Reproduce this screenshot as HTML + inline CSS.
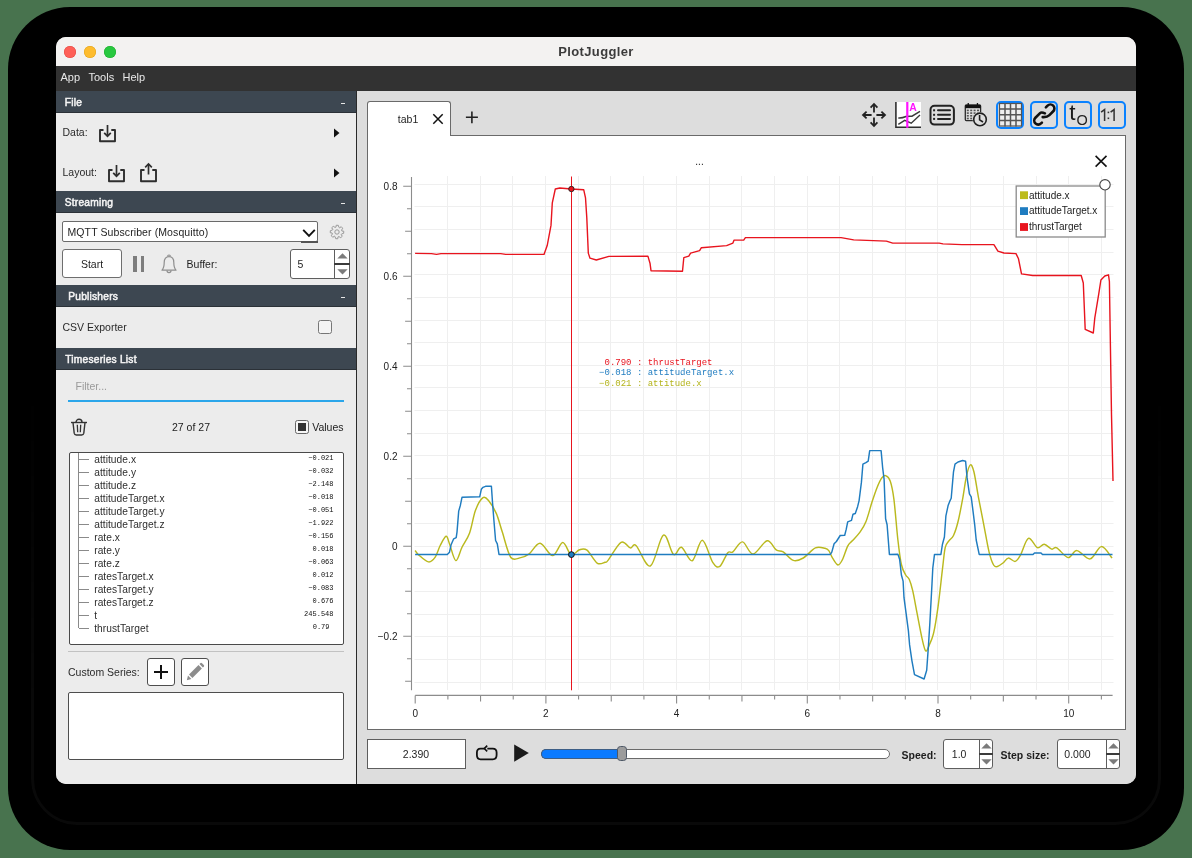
<!DOCTYPE html>
<html><head><meta charset="utf-8"><title>PlotJuggler</title><style>
*{box-sizing:border-box;margin:0;padding:0}
html,body{width:1192px;height:858px;overflow:hidden;background:#48734e;font-family:"Liberation Sans",sans-serif;}
.a{position:absolute}
.t{position:absolute;white-space:pre}
svg{position:absolute;overflow:visible}
</style></head><body>
<div class="a" style="left:8px;top:7px;width:1176px;height:843px;background:#000;border-radius:62px"></div>
<div class="a" style="left:31px;top:31px;width:1130px;height:794px;border:3px solid #090909;border-radius:46px;-webkit-mask-image:linear-gradient(to bottom,transparent 0%,transparent 45%,#000 85%)"></div>
<div class="a" style="left:56px;top:37px;width:1080px;height:747px;border-radius:10px;overflow:hidden;background:#dddddd">
<div class="a" style="left:-56px;top:-37px;width:1192px;height:858px;will-change:transform">
<div class="a" style="left:56.00px;top:37.00px;width:1080.00px;height:29.00px;background:#f3f2f1"></div>
<div class="a" style="left:64px;top:46px;width:12px;height:12px;border-radius:50%;background:#fe5f57;box-shadow:inset 0 0 0 0.5px #e2463f"></div>
<div class="a" style="left:84px;top:46px;width:12px;height:12px;border-radius:50%;background:#febc2e;box-shadow:inset 0 0 0 0.5px #e1a116"></div>
<div class="a" style="left:104px;top:46px;width:12px;height:12px;border-radius:50%;background:#28c840;box-shadow:inset 0 0 0 0.5px #1aab29"></div>
<div class="t" style="left:296.00px;width:600px;text-align:center;top:44.60px;font-size:13px;line-height:13px;color:#3b3b3b;font-weight:bold;font-family:'Liberation Sans',sans-serif;letter-spacing:0.35px">PlotJuggler</div>
<div class="a" style="left:56.00px;top:66.00px;width:1080.00px;height:25.00px;background:#323232"></div>
<div class="t" style="left:60.50px;top:71.69px;font-size:11px;line-height:11px;color:#e8e8e8;font-weight:normal;font-family:'Liberation Sans',sans-serif;">App</div>
<div class="t" style="left:88.50px;top:71.69px;font-size:11px;line-height:11px;color:#e8e8e8;font-weight:normal;font-family:'Liberation Sans',sans-serif;">Tools</div>
<div class="t" style="left:122.50px;top:71.69px;font-size:11px;line-height:11px;color:#e8e8e8;font-weight:normal;font-family:'Liberation Sans',sans-serif;">Help</div>
<div class="a" style="left:56.00px;top:91.00px;width:300.00px;height:693.00px;background:#ececec"></div>
<div class="a" style="left:355.50px;top:91.00px;width:1.50px;height:693.00px;background:#2a2a2a"></div>
<div class="a" style="left:56.00px;top:91.00px;width:299.50px;height:21.50px;background:#3d4751;border-bottom:1px solid #2b3137"></div>
<div class="t" style="left:64.80px;top:97.97px;font-size:10.2px;line-height:10.2px;color:#f5f5f5;font-weight:normal;font-family:'Liberation Sans',sans-serif;-webkit-text-stroke:0.5px #f5f5f5;letter-spacing:0.22px">File</div>
<div class="a" style="left:341.00px;top:102.50px;width:4.30px;height:1.20px;background:#e6e6e6"></div>
<div class="t" style="left:62.50px;top:127.11px;font-size:10.5px;line-height:10.5px;color:#2a2a2a;font-weight:normal;font-family:'Liberation Sans',sans-serif;">Data:</div>
<div class="t" style="left:62.50px;top:167.01px;font-size:10.5px;line-height:10.5px;color:#2a2a2a;font-weight:normal;font-family:'Liberation Sans',sans-serif;">Layout:</div>
<svg style="left:98.5px;top:125px" width="18" height="18" viewBox="0 0 18 18"><path d="M4.5 5 H1 V16.3 H16 V5 H12.3" fill="none" stroke="#2e2e2e" stroke-width="1.9" stroke-linejoin="round"/><path d="M8.5 0 V11" stroke="#2e2e2e" stroke-width="1.7"/><path d="M5.2 7.8 L8.5 11.2 L11.8 7.8" fill="none" stroke="#2e2e2e" stroke-width="1.7"/></svg>
<svg style="left:108.2px;top:165px" width="18" height="18" viewBox="0 0 18 18"><path d="M4.5 5 H1 V16.3 H16 V5 H12.3" fill="none" stroke="#2e2e2e" stroke-width="1.9" stroke-linejoin="round"/><path d="M8.5 0 V11" stroke="#2e2e2e" stroke-width="1.7"/><path d="M5.2 7.8 L8.5 11.2 L11.8 7.8" fill="none" stroke="#2e2e2e" stroke-width="1.7"/></svg>
<svg style="left:140.3px;top:163px" width="18" height="20" viewBox="0 0 18 20"><path d="M4.5 7 H1 V18.3 H16 V7 H12.3" fill="none" stroke="#2e2e2e" stroke-width="1.9" stroke-linejoin="round"/><path d="M8.5 1 V11.5" stroke="#2e2e2e" stroke-width="1.7"/><path d="M5.2 4.3 L8.5 1 L11.8 4.3" fill="none" stroke="#2e2e2e" stroke-width="1.7"/></svg>
<svg style="left:332px;top:127.5px" width="8" height="10"><path d="M2 0.5 L7.5 5 L2 9.5Z" fill="#111"/></svg>
<svg style="left:332px;top:167.5px" width="8" height="10"><path d="M2 0.5 L7.5 5 L2 9.5Z" fill="#111"/></svg>
<div class="a" style="left:56.00px;top:191.00px;width:299.50px;height:21.50px;background:#3d4751;border-bottom:1px solid #2b3137"></div>
<div class="t" style="left:64.80px;top:197.97px;font-size:10.2px;line-height:10.2px;color:#f5f5f5;font-weight:normal;font-family:'Liberation Sans',sans-serif;-webkit-text-stroke:0.5px #f5f5f5;letter-spacing:0.22px">Streaming</div>
<div class="a" style="left:341.00px;top:202.50px;width:4.30px;height:1.20px;background:#e6e6e6"></div>
<div class="a" style="left:62.00px;top:221.30px;width:255.80px;height:21.20px;background:#fff;border:1px solid #6a6a6a;border-radius:2px"></div>
<div class="a" style="left:301.00px;top:241.00px;width:16.50px;height:1.80px;background:#555"></div>
<div class="t" style="left:67.50px;top:227.11px;font-size:10.5px;line-height:10.5px;color:#1e1e1e;font-weight:normal;font-family:'Liberation Sans',sans-serif;letter-spacing:0.1px">MQTT Subscriber (Mosquitto)</div>
<svg style="left:302px;top:228px" width="14" height="10"><path d="M1.2 1.8 L7 7.8 L12.8 1.8" fill="none" stroke="#111" stroke-width="1.9"/></svg>
<svg style="left:330px;top:225px" width="14" height="14"><path d="M6.19 0.25 L8.33 0.33 L8.91 2.38 L9.78 2.84 L11.20 1.65 L12.65 3.22 L11.62 5.09 L11.90 6.02 L13.75 6.19 L13.67 8.33 L11.62 8.91 L11.16 9.78 L12.35 11.20 L10.78 12.65 L8.91 11.62 L7.98 11.90 L7.81 13.75 L5.67 13.67 L5.09 11.62 L4.22 11.16 L2.80 12.35 L1.35 10.78 L2.38 8.91 L2.10 7.98 L0.25 7.81 L0.33 5.67 L2.38 5.09 L2.84 4.22 L1.65 2.80 L3.22 1.35 L5.09 2.38 L6.02 2.10Z" fill="none" stroke="#9a9a9a" stroke-width="1"/><circle cx="7" cy="7" r="2.2" fill="none" stroke="#9a9a9a" stroke-width="1"/></svg>
<div class="a" style="left:62.00px;top:249.40px;width:59.80px;height:29.10px;background:#fff;border:1px solid #6e6e6e;border-radius:3px"></div>
<div class="t" style="left:-208.00px;width:600px;text-align:center;top:258.71px;font-size:10.5px;line-height:10.5px;color:#1e1e1e;font-weight:normal;font-family:'Liberation Sans',sans-serif;">Start</div>
<div class="a" style="left:133.40px;top:255.90px;width:3.90px;height:16.00px;background:#7d7d7d"></div>
<div class="a" style="left:140.50px;top:255.90px;width:3.90px;height:16.00px;background:#7d7d7d"></div>
<svg style="left:160px;top:253px" width="18" height="22" viewBox="0 0 18 22"><path d="M2 17.2 C4 15 4.2 13 4.2 9.5 C4.2 6 6 3.6 9 3.6 C12 3.6 13.8 6 13.8 9.5 C13.8 13 14 15 16 17.2 Z" fill="none" stroke="#8e8e8e" stroke-width="1.2" stroke-linejoin="round"/><path d="M7.6 3.4 A1.4 1.4 0 0 1 10.4 3.4" fill="none" stroke="#8e8e8e" stroke-width="1.2"/><path d="M7 17.6 A2 2 0 0 0 11 17.6" fill="none" stroke="#8e8e8e" stroke-width="1.2"/></svg>
<div class="t" style="left:186.60px;top:258.71px;font-size:10.5px;line-height:10.5px;color:#1e1e1e;font-weight:normal;font-family:'Liberation Sans',sans-serif;">Buffer:</div>
<div class="a" style="left:290.40px;top:249.30px;width:59.40px;height:29.30px;background:#fff;border:1px solid #5e5e5e;border-radius:3px"></div>
<div class="a" style="left:334.20px;top:249.30px;width:1.20px;height:29.30px;background:#5e5e5e"></div>
<div class="a" style="left:334.20px;top:262.95px;width:15.60px;height:2.00px;background:#3c3c3c"></div>
<svg style="left:336.8px;top:253.10000000000002px" width="11" height="6"><path d="M0.3 5.6 L5.5 0.3 L10.7 5.6Z" fill="#7b7b7b"/></svg>
<svg style="left:336.8px;top:269.20000000000005px" width="11" height="6"><path d="M0.3 0.3 L5.5 5.6 L10.7 0.3Z" fill="#7b7b7b"/></svg>
<div class="t" style="left:297.60px;top:258.66px;font-size:10.5px;line-height:10.5px;color:#1e1e1e;font-weight:normal;font-family:'Liberation Sans',sans-serif;">5</div>
<div class="a" style="left:56.00px;top:285.20px;width:299.50px;height:21.50px;background:#3d4751;border-bottom:1px solid #2b3137"></div>
<div class="t" style="left:68.30px;top:292.17px;font-size:10.2px;line-height:10.2px;color:#f5f5f5;font-weight:normal;font-family:'Liberation Sans',sans-serif;-webkit-text-stroke:0.5px #f5f5f5;letter-spacing:0.22px">Publishers</div>
<div class="a" style="left:341.00px;top:296.70px;width:4.30px;height:1.20px;background:#e6e6e6"></div>
<div class="t" style="left:62.50px;top:322.31px;font-size:10.5px;line-height:10.5px;color:#2a2a2a;font-weight:normal;font-family:'Liberation Sans',sans-serif;">CSV Exporter</div>
<div class="a" style="left:318.00px;top:320.00px;width:14.00px;height:13.60px;background:#f4f4f4;border:1.2px solid #767676;border-radius:2.5px"></div>
<div class="a" style="left:56.00px;top:348.00px;width:299.50px;height:21.50px;background:#3d4751;border-bottom:1px solid #2b3137"></div>
<div class="t" style="left:65.30px;top:354.97px;font-size:10.2px;line-height:10.2px;color:#f5f5f5;font-weight:normal;font-family:'Liberation Sans',sans-serif;-webkit-text-stroke:0.5px #f5f5f5;letter-spacing:0.22px">Timeseries List</div>
<div class="t" style="left:75.50px;top:381.11px;font-size:10.5px;line-height:10.5px;color:#9a9a9a;font-weight:normal;font-family:'Liberation Sans',sans-serif;">Filter...</div>
<div class="a" style="left:68.00px;top:400.20px;width:276.00px;height:2.00px;background:#2ba6ea"></div>
<svg style="left:70px;top:418px" width="18" height="18" viewBox="0 0 18 18"><path d="M1 4.5 H17" stroke="#333" stroke-width="1.4"/><path d="M6 4.3 A3 3 0 0 1 12 4.3" fill="none" stroke="#333" stroke-width="1.4"/><path d="M3 4.5 L4.2 15.2 Q4.5 17 6.3 17 H11.7 Q13.5 17 13.8 15.2 L15 4.5" fill="none" stroke="#333" stroke-width="1.4"/><path d="M7.3 6.8 L7.7 14.3 M10.7 6.8 L10.3 14.3" stroke="#333" stroke-width="1.3"/></svg>
<div class="t" style="left:-109.00px;width:600px;text-align:center;top:422.11px;font-size:10.5px;line-height:10.5px;color:#222;font-weight:normal;font-family:'Liberation Sans',sans-serif;">27 of 27</div>
<div class="a" style="left:295.10px;top:420.00px;width:13.50px;height:13.60px;background:#f6f6f6;border:1.3px solid #666;border-radius:2.5px"></div>
<div class="a" style="left:298.10px;top:423.10px;width:7.70px;height:7.60px;background:#333"></div>
<div class="t" style="left:312.20px;top:421.91px;font-size:10.5px;line-height:10.5px;color:#222;font-weight:normal;font-family:'Liberation Sans',sans-serif;">Values</div>
<div class="a" style="left:68.50px;top:452.30px;width:275.50px;height:192.50px;background:#fff;border:1px solid #4a4a4a;border-radius:2px"></div>
<div class="a" style="left:78.40px;top:453.30px;width:1.00px;height:175.20px;background:#8a8a8a"></div>
<div class="a" style="left:79.00px;top:458.90px;width:10.00px;height:1.00px;background:#8a8a8a"></div>
<div class="t" style="left:94.20px;top:454.77px;font-size:10.2px;line-height:10.2px;color:#2e2e2e;font-weight:normal;font-family:'Liberation Sans',sans-serif;letter-spacing:0.05px">attitude.x</div>
<div class="t" style="left:-266.50px;width:600px;text-align:right;top:455.03px;font-size:7px;line-height:7px;color:#0e0e0e;font-weight:normal;font-family:'Liberation Mono',monospace;">&#8722;0.021</div>
<div class="a" style="left:79.00px;top:471.92px;width:10.00px;height:1.00px;background:#8a8a8a"></div>
<div class="t" style="left:94.20px;top:467.79px;font-size:10.2px;line-height:10.2px;color:#2e2e2e;font-weight:normal;font-family:'Liberation Sans',sans-serif;letter-spacing:0.05px">attitude.y</div>
<div class="t" style="left:-266.50px;width:600px;text-align:right;top:468.05px;font-size:7px;line-height:7px;color:#0e0e0e;font-weight:normal;font-family:'Liberation Mono',monospace;">&#8722;0.032</div>
<div class="a" style="left:79.00px;top:484.94px;width:10.00px;height:1.00px;background:#8a8a8a"></div>
<div class="t" style="left:94.20px;top:480.81px;font-size:10.2px;line-height:10.2px;color:#2e2e2e;font-weight:normal;font-family:'Liberation Sans',sans-serif;letter-spacing:0.05px">attitude.z</div>
<div class="t" style="left:-266.50px;width:600px;text-align:right;top:481.07px;font-size:7px;line-height:7px;color:#0e0e0e;font-weight:normal;font-family:'Liberation Mono',monospace;">&#8722;2.148</div>
<div class="a" style="left:79.00px;top:497.96px;width:10.00px;height:1.00px;background:#8a8a8a"></div>
<div class="t" style="left:94.20px;top:493.83px;font-size:10.2px;line-height:10.2px;color:#2e2e2e;font-weight:normal;font-family:'Liberation Sans',sans-serif;letter-spacing:0.05px">attitudeTarget.x</div>
<div class="t" style="left:-266.50px;width:600px;text-align:right;top:494.09px;font-size:7px;line-height:7px;color:#0e0e0e;font-weight:normal;font-family:'Liberation Mono',monospace;">&#8722;0.018</div>
<div class="a" style="left:79.00px;top:510.98px;width:10.00px;height:1.00px;background:#8a8a8a"></div>
<div class="t" style="left:94.20px;top:506.85px;font-size:10.2px;line-height:10.2px;color:#2e2e2e;font-weight:normal;font-family:'Liberation Sans',sans-serif;letter-spacing:0.05px">attitudeTarget.y</div>
<div class="t" style="left:-266.50px;width:600px;text-align:right;top:507.11px;font-size:7px;line-height:7px;color:#0e0e0e;font-weight:normal;font-family:'Liberation Mono',monospace;">&#8722;0.051</div>
<div class="a" style="left:79.00px;top:524.00px;width:10.00px;height:1.00px;background:#8a8a8a"></div>
<div class="t" style="left:94.20px;top:519.87px;font-size:10.2px;line-height:10.2px;color:#2e2e2e;font-weight:normal;font-family:'Liberation Sans',sans-serif;letter-spacing:0.05px">attitudeTarget.z</div>
<div class="t" style="left:-266.50px;width:600px;text-align:right;top:520.13px;font-size:7px;line-height:7px;color:#0e0e0e;font-weight:normal;font-family:'Liberation Mono',monospace;">&#8722;1.922</div>
<div class="a" style="left:79.00px;top:537.02px;width:10.00px;height:1.00px;background:#8a8a8a"></div>
<div class="t" style="left:94.20px;top:532.89px;font-size:10.2px;line-height:10.2px;color:#2e2e2e;font-weight:normal;font-family:'Liberation Sans',sans-serif;letter-spacing:0.05px">rate.x</div>
<div class="t" style="left:-266.50px;width:600px;text-align:right;top:533.15px;font-size:7px;line-height:7px;color:#0e0e0e;font-weight:normal;font-family:'Liberation Mono',monospace;">&#8722;0.156</div>
<div class="a" style="left:79.00px;top:550.04px;width:10.00px;height:1.00px;background:#8a8a8a"></div>
<div class="t" style="left:94.20px;top:545.91px;font-size:10.2px;line-height:10.2px;color:#2e2e2e;font-weight:normal;font-family:'Liberation Sans',sans-serif;letter-spacing:0.05px">rate.y</div>
<div class="t" style="left:-266.50px;width:600px;text-align:right;top:546.17px;font-size:7px;line-height:7px;color:#0e0e0e;font-weight:normal;font-family:'Liberation Mono',monospace;">0.018</div>
<div class="a" style="left:79.00px;top:563.06px;width:10.00px;height:1.00px;background:#8a8a8a"></div>
<div class="t" style="left:94.20px;top:558.93px;font-size:10.2px;line-height:10.2px;color:#2e2e2e;font-weight:normal;font-family:'Liberation Sans',sans-serif;letter-spacing:0.05px">rate.z</div>
<div class="t" style="left:-266.50px;width:600px;text-align:right;top:559.19px;font-size:7px;line-height:7px;color:#0e0e0e;font-weight:normal;font-family:'Liberation Mono',monospace;">&#8722;0.063</div>
<div class="a" style="left:79.00px;top:576.08px;width:10.00px;height:1.00px;background:#8a8a8a"></div>
<div class="t" style="left:94.20px;top:571.95px;font-size:10.2px;line-height:10.2px;color:#2e2e2e;font-weight:normal;font-family:'Liberation Sans',sans-serif;letter-spacing:0.05px">ratesTarget.x</div>
<div class="t" style="left:-266.50px;width:600px;text-align:right;top:572.21px;font-size:7px;line-height:7px;color:#0e0e0e;font-weight:normal;font-family:'Liberation Mono',monospace;">0.012</div>
<div class="a" style="left:79.00px;top:589.10px;width:10.00px;height:1.00px;background:#8a8a8a"></div>
<div class="t" style="left:94.20px;top:584.97px;font-size:10.2px;line-height:10.2px;color:#2e2e2e;font-weight:normal;font-family:'Liberation Sans',sans-serif;letter-spacing:0.05px">ratesTarget.y</div>
<div class="t" style="left:-266.50px;width:600px;text-align:right;top:585.23px;font-size:7px;line-height:7px;color:#0e0e0e;font-weight:normal;font-family:'Liberation Mono',monospace;">&#8722;0.083</div>
<div class="a" style="left:79.00px;top:602.12px;width:10.00px;height:1.00px;background:#8a8a8a"></div>
<div class="t" style="left:94.20px;top:597.99px;font-size:10.2px;line-height:10.2px;color:#2e2e2e;font-weight:normal;font-family:'Liberation Sans',sans-serif;letter-spacing:0.05px">ratesTarget.z</div>
<div class="t" style="left:-266.50px;width:600px;text-align:right;top:598.25px;font-size:7px;line-height:7px;color:#0e0e0e;font-weight:normal;font-family:'Liberation Mono',monospace;">0.676</div>
<div class="a" style="left:79.00px;top:615.14px;width:10.00px;height:1.00px;background:#8a8a8a"></div>
<div class="t" style="left:94.20px;top:611.01px;font-size:10.2px;line-height:10.2px;color:#2e2e2e;font-weight:normal;font-family:'Liberation Sans',sans-serif;letter-spacing:0.05px">t</div>
<div class="t" style="left:-266.50px;width:600px;text-align:right;top:611.27px;font-size:7px;line-height:7px;color:#0e0e0e;font-weight:normal;font-family:'Liberation Mono',monospace;">245.548</div>
<div class="a" style="left:79.00px;top:628.16px;width:10.00px;height:1.00px;background:#8a8a8a"></div>
<div class="t" style="left:94.20px;top:624.03px;font-size:10.2px;line-height:10.2px;color:#2e2e2e;font-weight:normal;font-family:'Liberation Sans',sans-serif;letter-spacing:0.05px">thrustTarget</div>
<div class="t" style="left:-270.50px;width:600px;text-align:right;top:624.29px;font-size:7px;line-height:7px;color:#0e0e0e;font-weight:normal;font-family:'Liberation Mono',monospace;">0.79</div>
<div class="a" style="left:68.00px;top:650.50px;width:276.00px;height:1.00px;background:#c2c2c2"></div>
<div class="t" style="left:68.00px;top:666.91px;font-size:10.5px;line-height:10.5px;color:#2a2a2a;font-weight:normal;font-family:'Liberation Sans',sans-serif;">Custom Series:</div>
<div class="a" style="left:147.00px;top:658.10px;width:27.80px;height:27.60px;background:#fff;border:1px solid #4e4e4e;border-radius:3px"></div>
<div class="a" style="left:154.20px;top:671.30px;width:13.80px;height:2.00px;background:#111"></div>
<div class="a" style="left:160.10px;top:665.20px;width:2.00px;height:14.20px;background:#111"></div>
<div class="a" style="left:181.20px;top:658.10px;width:27.50px;height:27.60px;background:#fff;border:1px solid #4e4e4e;border-radius:3px"></div>
<svg style="left:185px;top:663px" width="20" height="20" viewBox="0 0 20 20"><path d="M1.8 17.2 L3 12.6 L6.4 16 Z" fill="#8c8c8c"/><path d="M4 11.6 L13.5 2.1 L16.9 5.5 L7.4 15 Z" fill="#8c8c8c"/><path d="M14.5 1.1 L15.6 0 Q16.3 -0.5 17 0.2 L18.8 2 Q19.5 2.7 19 3.4 L17.9 4.5 Z" fill="#8c8c8c"/></svg>
<div class="a" style="left:68.00px;top:692.30px;width:276.00px;height:67.30px;background:#fff;border:1px solid #4e4e4e;border-radius:2px"></div>
<div class="a" style="left:357.00px;top:91.00px;width:779.00px;height:693.00px;background:#dddddd"></div>
<div class="a" style="left:367.30px;top:134.80px;width:758.70px;height:595.00px;background:#fff;border:1px solid #6a6a6a"></div>
<div class="a" style="left:367.30px;top:101.00px;width:83.70px;height:35.00px;background:#fff;border:1px solid #6a6a6a;border-bottom:none;border-radius:3px 3px 0 0"></div>
<div class="t" style="left:108.00px;width:600px;text-align:center;top:114.11px;font-size:10.5px;line-height:10.5px;color:#1e1e1e;font-weight:normal;font-family:'Liberation Sans',sans-serif;">tab1</div>
<svg style="left:432px;top:113px" width="12" height="12"><path d="M1.3 1.3 L10.7 10.7 M10.7 1.3 L1.3 10.7" stroke="#111" stroke-width="1.5"/></svg>
<svg style="left:465px;top:111px" width="14" height="13"><path d="M6.9 0.5 V12.2 M0.9 6.3 H12.9" stroke="#222" stroke-width="1.6"/></svg>
<svg style="left:861px;top:102px" width="26" height="26" viewBox="0 0 26 26"><g stroke="#222" stroke-width="1.8" fill="none"><path d="M13 2.5 V10.6 M13 15.4 V23.5 M2.5 13 H10.6 M15.4 13 H23.5"/><path d="M9.6 5.6 L13 2 L16.4 5.6 M9.6 20.4 L13 24 L16.4 20.4 M5.6 9.6 L2 13 L5.6 16.4 M20.4 9.6 L24 13 L20.4 16.4" stroke-linejoin="miter"/></g></svg>
<svg style="left:895px;top:102px" width="26" height="26" viewBox="0 0 26 26"><rect x="0" y="0" width="26" height="25.8" fill="#fff"/><path d="M0.9 0 V25.2 H26" fill="none" stroke="#2e2e2e" stroke-width="1.6"/><path d="M3.3 16 Q7 16.3 11 14.5 Q14 14 17 14.2 L25 9.4" fill="none" stroke="#3a3a3a" stroke-width="1.5"/><path d="M3.3 22.4 L9.7 18.3 L16.2 21.2 L25 13" fill="none" stroke="#3a3a3a" stroke-width="1.4"/><rect x="11.2" y="0" width="2.2" height="25.8" fill="#ff14ff"/><text x="17.9" y="8.7" font-family="Liberation Sans" font-weight="bold" font-size="10.4" fill="#ff14ff" text-anchor="middle">A</text></svg>
<svg style="left:928px;top:104px" width="28" height="22" viewBox="0 0 28 22"><rect x="2.5" y="1.8" width="23.4" height="18.8" rx="4" fill="none" stroke="#222" stroke-width="2"/><g fill="#222"><rect x="5.1" y="5.3" width="2" height="2"/><rect x="5.1" y="9.8" width="2" height="2"/><rect x="5.1" y="13.9" width="2" height="2"/></g><path d="M10 6.3 H22 M10 10.8 H22 M10 14.9 H22" stroke="#222" stroke-width="2" stroke-linecap="round"/></svg>
<svg style="left:964px;top:102px" width="26" height="27" viewBox="0 0 26 27"><rect x="1.3" y="3" width="15.3" height="15.6" rx="1" fill="none" stroke="#2a2a2a" stroke-width="1.3"/><rect x="1.3" y="3" width="15.3" height="3.2" fill="#111"/><rect x="3.6" y="1" width="1.3" height="3" fill="#111"/><rect x="12.8" y="1" width="1.3" height="3" fill="#111"/><rect x="2.8" y="7.6" width="2" height="1.6" fill="#555"/><rect x="6.2" y="7.6" width="2" height="1.6" fill="#555"/><rect x="9.6" y="7.6" width="2" height="1.6" fill="#555"/><rect x="13.0" y="7.6" width="2" height="1.6" fill="#555"/><rect x="2.8" y="10.3" width="2" height="1.6" fill="#555"/><rect x="6.2" y="10.3" width="2" height="1.6" fill="#555"/><rect x="9.6" y="10.3" width="2" height="1.6" fill="#555"/><rect x="13.0" y="10.3" width="2" height="1.6" fill="#555"/><rect x="2.8" y="13.0" width="2" height="1.6" fill="#555"/><rect x="6.2" y="13.0" width="2" height="1.6" fill="#555"/><rect x="9.6" y="13.0" width="2" height="1.6" fill="#555"/><rect x="13.0" y="13.0" width="2" height="1.6" fill="#555"/><rect x="2.8" y="15.7" width="2" height="1.6" fill="#555"/><rect x="6.2" y="15.7" width="2" height="1.6" fill="#555"/><rect x="9.6" y="15.7" width="2" height="1.6" fill="#555"/><rect x="13.0" y="15.7" width="2" height="1.6" fill="#555"/><circle cx="16" cy="17.4" r="7.4" fill="#dddddd"/><circle cx="16" cy="17.4" r="6.3" fill="none" stroke="#1e1e1e" stroke-width="1.6"/><path d="M15.6 13 V17.8 L19 20" fill="none" stroke="#1e1e1e" stroke-width="1.6"/></svg>
<div class="a" style="left:996.10px;top:100.90px;width:27.90px;height:27.90px;border:2px solid #0a82ff;border-radius:5px"></div>
<div class="a" style="left:1030.20px;top:100.90px;width:27.90px;height:27.90px;border:2px solid #0a82ff;border-radius:5px"></div>
<div class="a" style="left:1064.10px;top:100.90px;width:27.90px;height:27.90px;border:2px solid #0a82ff;border-radius:5px"></div>
<div class="a" style="left:1098.20px;top:100.90px;width:27.90px;height:27.90px;border:2px solid #0a82ff;border-radius:5px"></div>
<svg style="left:998.5px;top:103.3px" width="23" height="23.5" viewBox="0 0 23 23.5"><rect x="0.5" y="0.5" width="22" height="22.5" fill="#eeeeee" stroke="#555" stroke-width="1.2"/><path d="M6.0 0 V23.5 M0 6.1 H23" stroke="#555" stroke-width="1.5"/><path d="M11.5 0 V23.5 M0 11.7 H23" stroke="#555" stroke-width="1.5"/><path d="M17.0 0 V23.5 M0 17.4 H23" stroke="#555" stroke-width="1.5"/></svg>
<svg style="left:0;top:0" width="1192" height="200"><g transform="translate(1044.6,114.8) rotate(-45)" fill="none" stroke="#111" stroke-width="2.6" stroke-linecap="round"><path d="M6.2 -4.4 L8.6 -4.4 A4 4 0 0 1 8.6 3.6 L3.2 3.6 C0.8 3.6 -1.2 2.4 -3 0.3"/><path d="M1.3 -0.8 C0.6 -2.6 -0.2 -4.4 -2 -4.4 L-8.6 -4.4 A4 4 0 0 0 -8.6 3.6 L-7.4 3.6"/></g></svg>
<div class="t" style="left:772.40px;width:600px;text-align:center;top:102.35px;font-size:22.5px;line-height:22.5px;color:#1a1a1a;font-weight:normal;font-family:'Liberation Sans',sans-serif;">t</div>
<div class="t" style="left:782.20px;width:600px;text-align:center;top:113.43px;font-size:14.5px;line-height:14.5px;color:#222;font-weight:normal;font-family:'Liberation Sans',sans-serif;">O</div>
<svg style="left:0;top:0" width="1192" height="200"><g stroke="#333" stroke-width="1.5" fill="none"><path d="M1101.1 112.2 L1104.6 109.6 V120.9 M1110.6 112.2 L1114.1 109.6 V120.9"/></g><rect x="1107.6" y="111.6" width="1.6" height="1.6" fill="#333"/><rect x="1107.6" y="117.5" width="1.6" height="1.6" fill="#333"/></svg>
<div class="a" style="left:367.40px;top:739.30px;width:99.10px;height:29.30px;background:#fff;border:1px solid #5e5e5e"></div>
<div class="t" style="left:116.00px;width:600px;text-align:center;top:748.61px;font-size:10.5px;line-height:10.5px;color:#1e1e1e;font-weight:normal;font-family:'Liberation Sans',sans-serif;">2.390</div>
<svg style="left:475px;top:744px" width="24" height="19" viewBox="0 0 24 19"><path d="M9.8 4.6 H5.6 Q1.9 4.6 1.9 8.6 V11 Q1.9 15.3 5.6 15.3 H17.8 Q21.6 15.3 21.6 11 V8.6 Q21.6 4.6 17.8 4.6 H12.3" fill="none" stroke="#111" stroke-width="1.8"/><path d="M12.2 1.6 L9.3 4.6 L12.2 7.4" fill="none" stroke="#111" stroke-width="1.6"/></svg>
<svg style="left:513px;top:744px" width="17" height="19"><path d="M1.2 0.4 L15.8 9.1 L1.2 17.8Z" fill="#1a1a1a"/></svg>
<div class="a" style="left:541.30px;top:749.00px;width:348.30px;height:9.60px;background:#fff;border:1px solid #6a6a6a;border-radius:5px"></div>
<div class="a" style="left:541.30px;top:749.00px;width:80.70px;height:9.60px;background:#0a7aff;border:1px solid #3d5e86;border-radius:5px 0 0 5px;border-right:none"></div>
<div class="a" style="left:617.20px;top:746.10px;width:9.80px;height:15.40px;background:#9c9c9c;border:1px solid #4e5866;border-radius:3.5px"></div>
<div class="t" style="left:901.60px;top:749.71px;font-size:10.5px;line-height:10.5px;color:#1e1e1e;font-weight:bold;font-family:'Liberation Sans',sans-serif;">Speed:</div>
<div class="t" style="left:1000.50px;top:749.71px;font-size:10.5px;line-height:10.5px;color:#1e1e1e;font-weight:bold;font-family:'Liberation Sans',sans-serif;">Step size:</div>
<div class="a" style="left:943.40px;top:739.20px;width:50.00px;height:29.40px;background:#fff;border:1px solid #5e5e5e;border-radius:3px"></div>
<div class="a" style="left:978.60px;top:739.20px;width:1.20px;height:29.40px;background:#5e5e5e"></div>
<div class="a" style="left:978.60px;top:752.90px;width:14.80px;height:2.00px;background:#3c3c3c"></div>
<svg style="left:980.8px;top:743.0px" width="11" height="6"><path d="M0.3 5.6 L5.5 0.3 L10.7 5.6Z" fill="#7b7b7b"/></svg>
<svg style="left:980.8px;top:759.2px" width="11" height="6"><path d="M0.3 0.3 L5.5 5.6 L10.7 0.3Z" fill="#7b7b7b"/></svg>
<div class="t" style="left:951.80px;top:748.61px;font-size:10.5px;line-height:10.5px;color:#1e1e1e;font-weight:normal;font-family:'Liberation Sans',sans-serif;">1.0</div>
<div class="a" style="left:1057.30px;top:739.20px;width:63.00px;height:29.40px;background:#fff;border:1px solid #5e5e5e;border-radius:3px"></div>
<div class="a" style="left:1105.50px;top:739.20px;width:1.20px;height:29.40px;background:#5e5e5e"></div>
<div class="a" style="left:1105.50px;top:752.90px;width:14.80px;height:2.00px;background:#3c3c3c"></div>
<svg style="left:1107.7px;top:743.0px" width="11" height="6"><path d="M0.3 5.6 L5.5 0.3 L10.7 5.6Z" fill="#7b7b7b"/></svg>
<svg style="left:1107.7px;top:759.2px" width="11" height="6"><path d="M0.3 0.3 L5.5 5.6 L10.7 0.3Z" fill="#7b7b7b"/></svg>
<div class="t" style="left:1064.30px;top:748.61px;font-size:10.5px;line-height:10.5px;color:#1e1e1e;font-weight:normal;font-family:'Liberation Sans',sans-serif;">0.000</div>
<svg style="left:0;top:0" width="1192" height="858" viewBox="0 0 1192 858"><path d="M414.5 682.50 H1113.5 M414.5 659.50 H1113.5 M414.5 636.50 H1113.5 M414.5 614.50 H1113.5 M414.5 591.50 H1113.5 M414.5 568.50 H1113.5 M414.5 546.50 H1113.5 M414.5 523.50 H1113.5 M414.5 501.50 H1113.5 M414.5 478.50 H1113.5 M414.5 455.50 H1113.5 M414.5 433.50 H1113.5 M414.5 410.50 H1113.5 M414.5 387.50 H1113.5 M414.5 365.50 H1113.5 M414.5 342.50 H1113.5 M414.5 320.50 H1113.5 M414.5 297.50 H1113.5 M414.5 274.50 H1113.5 M414.5 252.50 H1113.5 M414.5 229.50 H1113.5 M414.5 206.50 H1113.5 M414.5 184.50 H1113.5 M447.50 176 V690 M480.50 176 V690 M512.50 176 V690 M545.50 176 V690 M578.50 176 V690 M610.50 176 V690 M643.50 176 V690 M676.50 176 V690 M709.50 176 V690 M741.50 176 V690 M774.50 176 V690 M807.50 176 V690 M839.50 176 V690 M872.50 176 V690 M905.50 176 V690 M937.50 176 V690 M970.50 176 V690 M1003.50 176 V690 M1036.50 176 V690 M1068.50 176 V690 M1101.50 176 V690" stroke="#efefef" stroke-width="1" fill="none"/><path d="M411.5 177 V690.3 M415.2 695.4 H1112.6 M405.10 681.30 H411.5 M407.00 658.80 H411.5 M403.20 636.30 H411.5 M407.00 613.80 H411.5 M405.10 591.30 H411.5 M407.00 568.80 H411.5 M403.20 546.30 H411.5 M407.00 523.80 H411.5 M405.10 501.30 H411.5 M407.00 478.80 H411.5 M403.20 456.30 H411.5 M407.00 433.80 H411.5 M405.10 411.30 H411.5 M407.00 388.80 H411.5 M403.20 366.30 H411.5 M407.00 343.80 H411.5 M405.10 321.30 H411.5 M407.00 298.80 H411.5 M403.20 276.30 H411.5 M407.00 253.80 H411.5 M405.10 231.30 H411.5 M407.00 208.80 H411.5 M403.20 186.30 H411.5 M415.20 695.4 V703.50 M447.88 695.4 V699.50 M480.55 695.4 V701.50 M513.23 695.4 V699.50 M545.90 695.4 V703.50 M578.58 695.4 V699.50 M611.25 695.4 V701.50 M643.92 695.4 V699.50 M676.60 695.4 V703.50 M709.27 695.4 V699.50 M741.95 695.4 V701.50 M774.62 695.4 V699.50 M807.30 695.4 V703.50 M839.97 695.4 V699.50 M872.65 695.4 V701.50 M905.32 695.4 V699.50 M938.00 695.4 V703.50 M970.67 695.4 V699.50 M1003.35 695.4 V701.50 M1036.02 695.4 V699.50 M1068.70 695.4 V703.50 M1101.38 695.4 V699.50" stroke="#8c8c8c" stroke-width="1.1" fill="none"/><text x="397.5" y="189.90" font-family="Liberation Sans" font-size="10" fill="#222" text-anchor="end">0.8</text><text x="397.5" y="279.90" font-family="Liberation Sans" font-size="10" fill="#222" text-anchor="end">0.6</text><text x="397.5" y="369.90" font-family="Liberation Sans" font-size="10" fill="#222" text-anchor="end">0.4</text><text x="397.5" y="459.90" font-family="Liberation Sans" font-size="10" fill="#222" text-anchor="end">0.2</text><text x="397.5" y="549.90" font-family="Liberation Sans" font-size="10" fill="#222" text-anchor="end">0</text><text x="397.5" y="639.90" font-family="Liberation Sans" font-size="10" fill="#222" text-anchor="end">&#8722;0.2</text><text x="415.20" y="716.6" font-family="Liberation Sans" font-size="10" fill="#222" text-anchor="middle">0</text><text x="545.90" y="716.6" font-family="Liberation Sans" font-size="10" fill="#222" text-anchor="middle">2</text><text x="676.60" y="716.6" font-family="Liberation Sans" font-size="10" fill="#222" text-anchor="middle">4</text><text x="807.30" y="716.6" font-family="Liberation Sans" font-size="10" fill="#222" text-anchor="middle">6</text><text x="938.00" y="716.6" font-family="Liberation Sans" font-size="10" fill="#222" text-anchor="middle">8</text><text x="1068.70" y="716.6" font-family="Liberation Sans" font-size="10" fill="#222" text-anchor="middle">10</text><text x="699.5" y="164.5" font-family="Liberation Sans" font-size="10" fill="#222" text-anchor="middle">...</text><path d="M1095.6 155.9 L1106.5 166.6 M1106.5 155.9 L1095.6 166.6" stroke="#111" stroke-width="1.6"/><path d="M415.10 550.50 C415.65 551.20 416.17 552.80 418.40 554.70 C420.63 556.60 425.70 561.48 428.50 561.90 C431.30 562.32 433.25 559.93 435.20 557.20 C437.15 554.47 438.38 548.98 440.20 545.50 C442.02 542.02 444.55 536.58 446.10 536.30 C447.65 536.02 447.88 539.75 449.50 543.80 C451.12 547.85 453.72 560.03 455.80 560.60 C457.88 561.17 459.70 551.82 462.00 547.20 C464.30 542.58 467.35 539.05 469.60 532.90 C471.85 526.75 473.27 516.17 475.50 510.30 C477.73 504.43 480.77 499.25 483.00 497.70 C485.23 496.15 486.67 498.35 488.90 501.00 C491.13 503.65 494.17 508.42 496.40 513.60 C498.63 518.78 499.92 524.83 502.30 532.10 C504.68 539.37 507.62 552.95 510.70 557.20 C513.78 561.45 517.72 558.15 520.80 557.60 C523.88 557.05 525.98 556.28 529.20 553.90 C532.42 551.52 536.20 543.02 540.10 543.30 C544.00 543.58 548.83 555.73 552.60 555.60 C556.37 555.47 559.62 542.65 562.70 542.50 C565.78 542.35 568.30 553.50 571.10 554.70 C573.90 555.90 576.85 550.45 579.50 549.70 C582.15 548.95 584.07 547.97 587.00 550.20 C589.93 552.43 594.10 561.08 597.10 563.10 C600.10 565.12 603.18 562.75 605.00 562.30 C606.82 561.85 605.32 563.73 608.00 560.40 C610.68 557.07 617.40 544.38 621.10 542.30 C624.80 540.22 627.68 547.33 630.20 547.90 C632.72 548.47 632.85 542.68 636.20 545.70 C639.55 548.72 645.77 567.75 650.30 566.00 C654.83 564.25 659.53 537.13 663.40 535.20 C667.27 533.27 670.48 552.38 673.50 554.40 C676.52 556.42 678.38 546.23 681.50 547.30 C684.62 548.37 688.73 561.97 692.20 560.80 C695.67 559.63 698.88 540.03 702.30 540.30 C705.72 540.57 709.78 558.05 712.70 562.40 C715.62 566.75 717.28 568.02 719.80 566.40 C722.32 564.78 725.62 555.12 727.80 552.70 C729.98 550.28 730.45 553.70 732.90 551.90 C735.35 550.10 739.15 541.55 742.50 541.90 C745.85 542.25 748.90 554.20 753.00 554.00 C757.10 553.80 763.23 541.38 767.10 540.70 C770.97 540.02 773.52 548.03 776.20 549.90 C778.88 551.77 780.35 550.15 783.20 551.90 C786.05 553.65 789.95 559.38 793.30 560.40 C796.65 561.42 799.62 560.08 803.30 558.00 C806.98 555.92 811.78 549.52 815.40 547.90 C819.02 546.28 822.77 547.85 825.00 548.30 C827.23 548.75 827.53 548.95 828.80 550.60 C830.07 552.25 831.08 555.80 832.60 558.20 C834.12 560.60 836.27 564.75 837.90 565.00 C839.53 565.25 840.77 562.85 842.40 559.70 C844.03 556.55 846.05 549.25 847.70 546.10 C849.35 542.95 850.28 543.08 852.30 540.80 C854.32 538.52 857.53 535.57 859.80 532.40 C862.07 529.23 863.87 526.85 865.90 521.80 C867.93 516.75 870.10 507.90 872.00 502.10 C873.90 496.30 875.67 491.03 877.30 487.00 C878.93 482.97 880.42 479.80 881.80 477.90 C883.18 476.00 884.20 475.10 885.60 475.60 C887.00 476.10 888.82 476.98 890.20 480.90 C891.58 484.82 892.62 489.25 893.90 499.10 C895.18 508.95 896.65 529.10 897.90 540.00 C899.15 550.90 900.10 558.67 901.40 564.50 C902.70 570.33 904.40 572.53 905.70 575.00 C907.00 577.47 908.03 576.68 909.20 579.30 C910.37 581.92 911.38 585.02 912.70 590.70 C914.02 596.38 915.50 605.23 917.10 613.40 C918.70 621.57 920.85 633.43 922.30 639.70 C923.75 645.97 924.63 650.13 925.80 651.00 C926.97 651.87 927.98 647.95 929.30 644.90 C930.62 641.85 932.23 639.12 933.70 632.70 C935.17 626.28 936.65 616.90 938.10 606.40 C939.55 595.90 941.22 579.50 942.40 569.70 C943.58 559.90 944.12 552.42 945.20 547.60 C946.28 542.78 947.52 542.82 948.90 540.80 C950.28 538.78 951.98 538.67 953.50 535.50 C955.02 532.33 956.48 527.87 958.00 521.80 C959.52 515.73 961.20 506.67 962.60 499.10 C964.00 491.53 965.13 482.08 966.40 476.40 C967.67 470.72 968.95 465.77 970.20 465.00 C971.45 464.23 972.52 466.37 973.90 471.80 C975.28 477.23 976.85 488.77 978.50 497.60 C980.15 506.43 982.03 515.72 983.80 524.80 C985.57 533.88 987.47 545.40 989.10 552.10 C990.73 558.80 992.22 562.60 993.60 565.00 C994.98 567.40 995.83 566.83 997.40 566.50 C998.97 566.17 1001.18 564.40 1003.00 563.00 C1004.82 561.60 1006.27 558.37 1008.30 558.10 C1010.33 557.83 1013.20 561.85 1015.20 561.40 C1017.20 560.95 1018.10 559.23 1020.30 555.40 C1022.50 551.57 1025.57 539.70 1028.40 538.40 C1031.23 537.10 1034.67 546.62 1037.30 547.60 C1039.93 548.58 1041.80 544.05 1044.20 544.30 C1046.60 544.55 1049.60 548.52 1051.70 549.10 C1053.80 549.68 1054.07 546.38 1056.80 547.80 C1059.53 549.22 1064.75 557.13 1068.10 557.60 C1071.45 558.07 1073.23 550.38 1076.90 550.60 C1080.57 550.82 1086.02 559.57 1090.10 558.90 C1094.18 558.23 1097.73 546.73 1101.40 546.60 C1105.07 546.47 1110.32 556.18 1112.10 558.10" stroke="#bab91e" stroke-width="1.45" fill="none" stroke-linejoin="round"/><path d="M415.10 554.40 L447.30 554.40 L449.50 552.20 L451.10 544.70 L453.70 538.80 L456.20 537.60 L457.00 532.10 L458.70 511.10 L460.40 505.20 L462.00 497.30 L479.70 496.80 L481.30 489.30 L483.00 487.30 L485.50 486.30 L491.40 486.30 L492.60 503.60 L493.90 520.30 L495.60 540.50 L497.30 543.80 L499.00 554.40 L830.30 554.40 L831.80 552.10 L834.10 543.80 L836.40 541.50 L840.20 535.50 L844.70 535.20 L846.20 529.40 L847.70 521.80 L851.50 520.30 L853.00 514.20 L855.30 513.50 L857.60 506.70 L859.10 500.60 L861.40 482.40 L862.90 464.20 L865.90 462.70 L868.20 461.20 L869.70 450.60 L881.10 450.60 L882.60 467.30 L884.10 479.40 L885.60 518.80 L887.10 524.80 L889.40 554.40 L897.90 554.30 L899.60 559.20 L901.40 575.00 L903.10 581.10 L904.00 597.70 L906.10 613.40 L908.40 630.90 L909.60 644.90 L911.90 660.60 L914.50 674.60 L924.10 679.00 L926.70 670.20 L928.50 644.90 L929.90 622.20 L932.00 583.70 L932.80 568.00 L934.50 554.40 L940.90 554.40 L942.40 544.50 L944.40 537.00 L945.90 515.80 L948.20 505.20 L949.70 501.40 L951.20 498.30 L952.70 480.90 L953.50 471.80 L955.00 464.20 L958.00 462.00 L962.60 460.50 L965.60 461.20 L967.10 477.90 L969.40 493.80 L971.20 496.80 L973.20 512.70 L974.70 524.80 L976.20 540.00 L979.20 554.40 L1033.00 554.50 L1034.50 553.00 L1041.00 553.00 L1042.50 554.50 L1112.50 554.50" stroke="#1f7cc0" stroke-width="1.45" fill="none" stroke-linejoin="round"/><path d="M415.10 253.40 L431.50 253.60 L436.50 254.40 L441.00 253.60 L500.70 253.60 L505.70 254.40 L544.00 254.40 L547.20 245.60 L551.00 225.40 L552.30 202.80 L555.30 189.00 L559.80 188.00 L571.20 189.00 L583.70 189.70 L585.50 197.80 L586.80 217.90 L588.30 253.10 L590.00 258.20 L596.30 260.00 L608.90 256.40 L647.90 256.10 L650.00 263.20 L651.00 270.70 L682.50 271.30 L683.80 257.70 L688.80 256.20 L690.60 253.20 L699.60 250.70 L701.40 247.70 L726.60 245.60 L732.90 243.10 L734.10 240.10 L743.70 240.10 L745.40 237.60 L841.10 237.60 L853.70 239.90 L886.40 241.10 L892.70 243.10 L939.20 243.10 L943.00 243.90 L961.90 244.60 L993.90 244.60 L997.90 251.20 L1003.90 253.00 L1016.00 253.60 L1018.50 258.80 L1021.50 273.90 L1032.70 275.50 L1081.20 275.50 L1083.30 283.00 L1085.20 329.40 L1093.30 333.00 L1094.80 317.90 L1098.80 293.60 L1100.90 280.00 L1104.80 276.00 L1108.50 274.80 L1109.40 281.50 L1111.50 414.80 L1113.00 480.90" stroke="#e8141e" stroke-width="1.4" fill="none" stroke-linejoin="round"/><path d="M571.5 176.5 V690.3" stroke="#e8141e" stroke-width="1"/><circle cx="571.4" cy="189" r="2.7" fill="#e8141e" stroke="#222" stroke-width="0.9"/><circle cx="571.4" cy="554.6" r="2.9" fill="#1f7cc0" stroke="#111" stroke-width="1"/><text x="599.1" y="364.6" font-family="Liberation Mono" font-size="9" fill="#e8141e" xml:space="preserve"> 0.790 : thrustTarget</text><text x="599.1" y="375.4" font-family="Liberation Mono" font-size="9" fill="#1f7cc0" xml:space="preserve">&#8722;0.018 : attitudeTarget.x</text><text x="599.1" y="386.4" font-family="Liberation Mono" font-size="9" fill="#b4b41c" xml:space="preserve">&#8722;0.021 : attitude.x</text><rect x="1016.2" y="186" width="89" height="51" fill="#fff" stroke="#8a8a8a" stroke-width="1.3"/><rect x="1020" y="191.30" width="8" height="7.8" fill="#bcbb1c"/><text x="1029" y="198.50" font-family="Liberation Sans" font-size="10" fill="#222">attitude.x</text><rect x="1020" y="207.20" width="8" height="7.8" fill="#1f7cc0"/><text x="1029" y="214.40" font-family="Liberation Sans" font-size="10" fill="#222">attitudeTarget.x</text><rect x="1020" y="223.10" width="8" height="7.8" fill="#e8141e"/><text x="1029" y="230.30" font-family="Liberation Sans" font-size="10" fill="#222">thrustTarget</text><circle cx="1105" cy="184.8" r="5.2" fill="#fff" stroke="#444" stroke-width="1.1"/></svg>
</div></div>
</body></html>
